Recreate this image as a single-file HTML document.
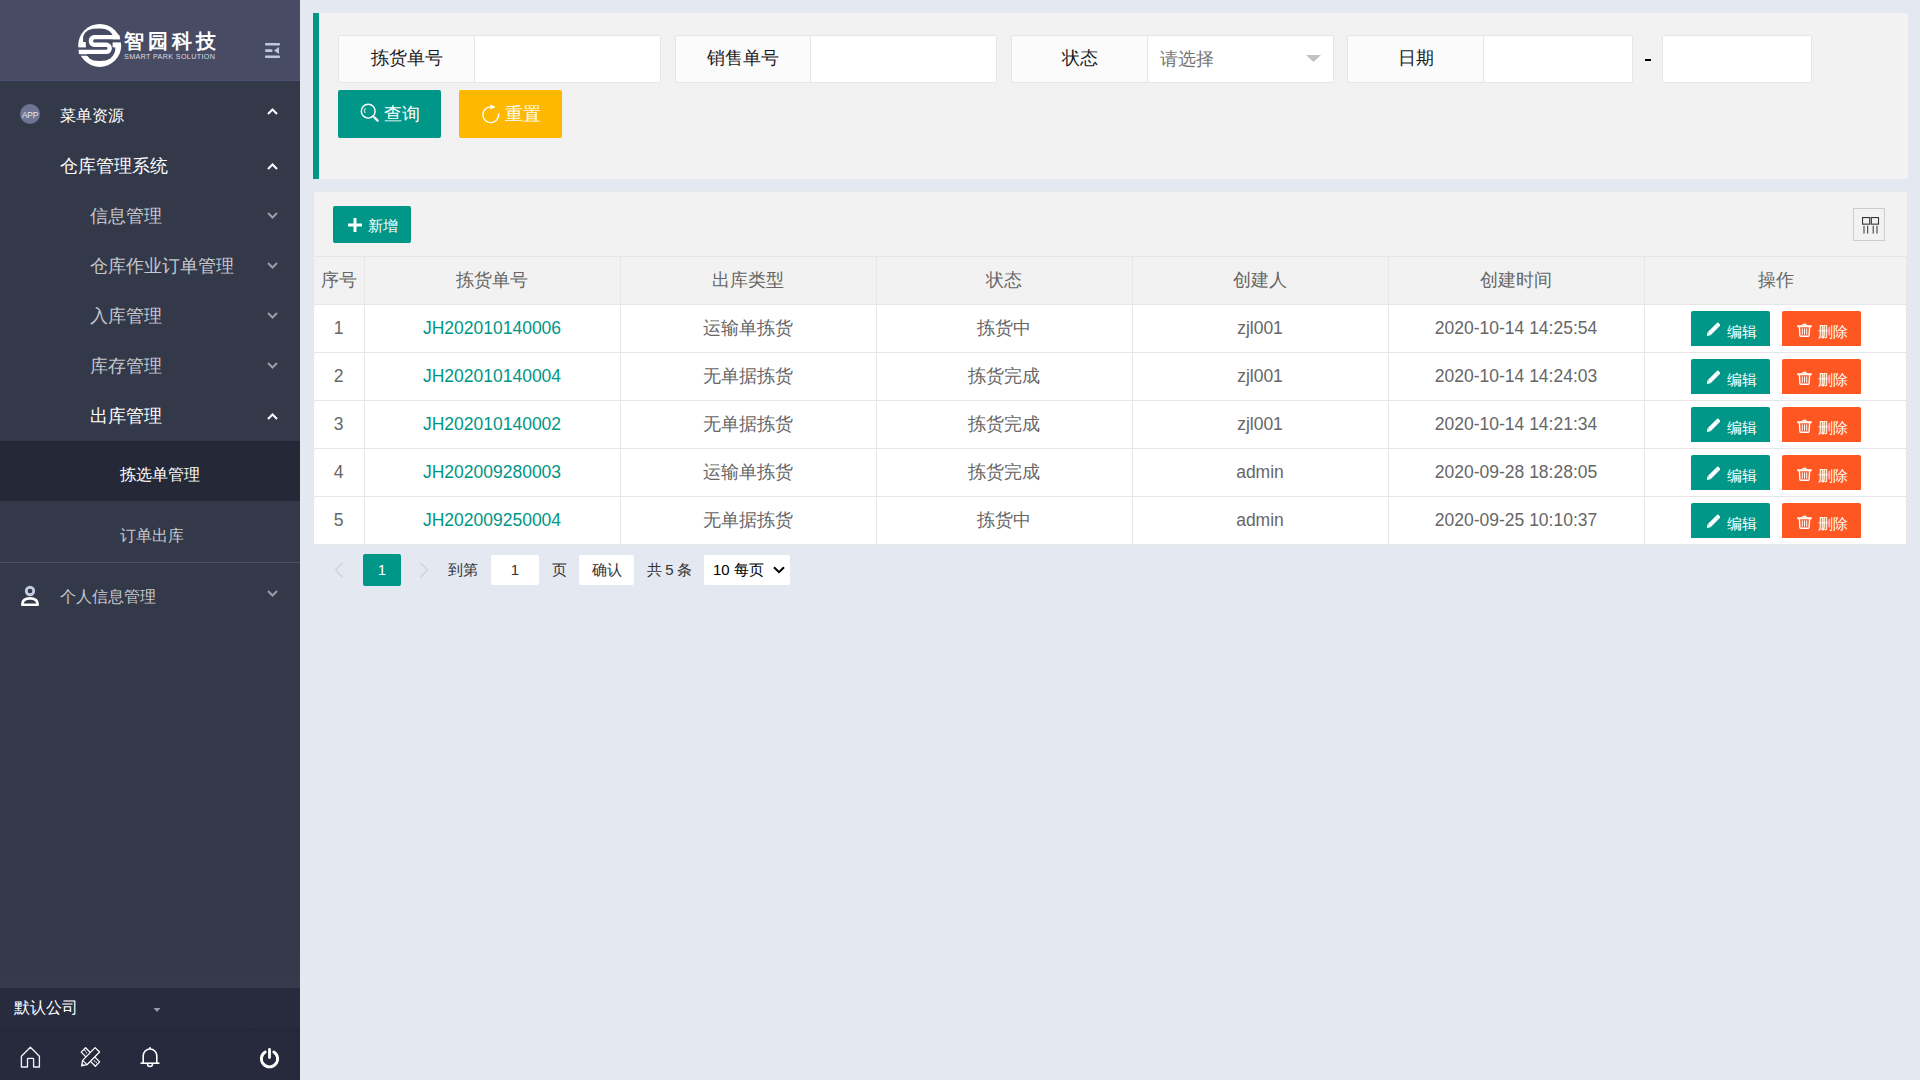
<!DOCTYPE html>
<html><head><meta charset="utf-8">
<style>
*{margin:0;padding:0;box-sizing:border-box}
html,body{width:1920px;height:1080px;overflow:hidden}
body{position:relative;background:#e4e8f1;font-family:"Liberation Sans",sans-serif;font-size:17.5px;color:#666}
.abs{position:absolute}
svg{position:absolute;overflow:visible}
/* sidebar */
#side{position:absolute;left:0;top:0;width:300px;height:1080px;background:#343949;overflow:hidden}
#logo{position:absolute;left:0;top:0;width:300px;height:81px;background:#474c64;border-bottom:1px solid #4b5270}
.mi{position:absolute;height:50px;line-height:50px;color:#c6c8ce;font-size:17.5px;white-space:nowrap}
.mi.w{color:#fff}
/* main */
.lab{position:absolute;top:35px;height:48px;background:#fbfbfb;border:1px solid #e6e6e6;border-radius:2px 0 0 2px;text-align:center;line-height:44px;color:#1a1a1a;font-size:17.5px}
.inp{position:absolute;top:35px;height:48px;background:#fff;border:1px solid #e6e6e6;border-left:none;border-radius:0 2px 2px 0}
.btn{position:absolute;color:#fff;text-align:center;border-radius:2px;white-space:nowrap}
.th,.td{position:absolute;text-align:center;white-space:nowrap;height:48px;line-height:48px;color:#666}
.vl{position:absolute;width:1px;background:#e6e6e6}
.hl{position:absolute;height:1px;background:#e6e6e6}
</style></head>
<body>
<div id="side">
  <div id="logo">
    <svg style="left:74px;top:20px" width="52" height="52" viewBox="0 0 52 52">
      <circle cx="25.7" cy="25.4" r="21.5" fill="#fff"/>
      <path d="M25.6 8.4 L31 8.9 L35 10.8 L37.5 13.2 L38.6 15 L38.6 27.2 L41.4 27.6 L41 31.5 L39.3 35.3 L36.3 38.6 L32 40.6 L25.6 41.1 L19.3 40.5 L15.5 38.5 L13 35.6 L12 30 L11.8 21.9 L9.1 21.9 L9.1 16.5 L11 12.8 L14 10.2 L19 8.8 Z" fill="#474c64"/>
      <rect x="0" y="27.4" width="14" height="2.7" fill="#474c64"/>
      <rect x="37" y="19.3" width="15" height="3.1" fill="#474c64"/>
      <path d="M4 34.2 H13.5 L14.5 35.7 H6.5 Z" fill="#474c64"/>
      <path d="M45.6 17.1 H20.2 A3.9 3.9 0 0 0 20.2 24.8 H32.2 A3.5 3.5 0 0 1 32.2 31.9 H4.8" fill="none" stroke="#fff" stroke-width="4.4"/>
    </svg>
    <div class="abs" style="left:124px;top:25px;font-size:20px;line-height:32px;font-weight:bold;color:#fff;letter-spacing:4px;white-space:nowrap">智园科技</div>
    <div class="abs" style="left:124px;top:52px;font-size:7.2px;line-height:10px;color:#d8dae2;letter-spacing:0.35px;white-space:nowrap">SMART PARK SOLUTION</div>
    <svg style="left:265px;top:43px" width="15" height="15" viewBox="0 0 15 15">
      <rect x="0" y="0" width="15" height="2.4" rx="1" fill="#c0c6dc"/>
      <rect x="0" y="6.2" width="7.5" height="2.8" rx="1.2" fill="#c0c6dc"/>
      <path d="M14 4 V11 L9 7.6 Z" fill="#c0c6dc"/>
      <rect x="0" y="12.4" width="15" height="2.6" rx="1" fill="#c0c6dc"/>
    </svg>
  </div>
  <!-- menu -->
  <div class="abs" style="left:20px;top:104px;width:20px;height:20px;border-radius:50%;background:#6e7492;color:#e6e7ee;font-size:8.4px;line-height:23px;text-align:center;letter-spacing:-0.3px">APP</div>
  <div class="mi w" style="left:60px;top:90px;font-size:16.25px">菜单资源</div>
  <svg style="left:267px;top:108px" width="11" height="7" viewBox="0 0 11 7"><path d="M1 6 L5.5 1.5 L10 6" fill="none" stroke="#fff" stroke-width="2"/></svg>
  <div class="mi w" style="left:60px;top:141px">仓库管理系统</div>
  <svg style="left:267px;top:163px" width="11" height="7" viewBox="0 0 11 7"><path d="M1 6 L5.5 1.5 L10 6" fill="none" stroke="#fff" stroke-width="2"/></svg>
  <div class="mi" style="left:90px;top:191px">信息管理</div>
  <svg style="left:267px;top:212px" width="11" height="7" viewBox="0 0 11 7"><path d="M1 1 L5.5 5.5 L10 1" fill="none" stroke="#9a9dab" stroke-width="2"/></svg>
  <div class="mi" style="left:90px;top:241px">仓库作业订单管理</div>
  <svg style="left:267px;top:262px" width="11" height="7" viewBox="0 0 11 7"><path d="M1 1 L5.5 5.5 L10 1" fill="none" stroke="#9a9dab" stroke-width="2"/></svg>
  <div class="mi" style="left:90px;top:291px">入库管理</div>
  <svg style="left:267px;top:312px" width="11" height="7" viewBox="0 0 11 7"><path d="M1 1 L5.5 5.5 L10 1" fill="none" stroke="#9a9dab" stroke-width="2"/></svg>
  <div class="mi" style="left:90px;top:341px">库存管理</div>
  <svg style="left:267px;top:362px" width="11" height="7" viewBox="0 0 11 7"><path d="M1 1 L5.5 5.5 L10 1" fill="none" stroke="#9a9dab" stroke-width="2"/></svg>
  <div class="mi w" style="left:90px;top:391px">出库管理</div>
  <svg style="left:267px;top:413px" width="11" height="7" viewBox="0 0 11 7"><path d="M1 6 L5.5 1.5 L10 6" fill="none" stroke="#fff" stroke-width="2"/></svg>
  <div class="abs" style="left:0;top:441px;width:300px;height:60px;background:#252937"></div>
  <div class="mi w" style="left:120px;top:449px;font-size:16.25px">拣选单管理</div>
  <div class="mi" style="left:120px;top:510px;font-size:16.25px">订单出库</div>
  <div class="abs" style="left:0;top:562px;width:300px;height:1px;background:#4a4e68"></div>
  <svg style="left:20px;top:585px" width="20" height="22" viewBox="0 0 20 22"><circle cx="10" cy="6" r="3.75" fill="none" stroke="#c5cce0" stroke-width="2.8"/><path d="M2.3 19.75 C2.3 15.2 4.8 13.4 10 13.4 C15.2 13.4 17.7 15.2 17.7 19.75 Z" fill="none" stroke="#fff" stroke-width="2.7" stroke-linejoin="round"/></svg>
  <div class="mi" style="left:60px;top:571px;font-size:16.25px">个人信息管理</div>
  <svg style="left:267px;top:590px" width="11" height="7" viewBox="0 0 11 7"><path d="M1 1 L5.5 5.5 L10 1" fill="none" stroke="#9a9dab" stroke-width="2"/></svg>
  <!-- bottom -->
  <div class="abs" style="left:0;top:950px;width:300px;height:38px;background:linear-gradient(#343949,#363a4c)"></div>
  <div class="abs" style="left:0;top:988px;width:300px;height:40px;background:#272b3d"></div>
  <div class="abs" style="left:0;top:1028px;width:300px;height:52px;background:linear-gradient(#23273a,#262a3c 8px,#262a3c)"></div>
  <div class="mi w" style="left:14px;top:983px;font-size:16px">默认公司</div>
  <svg style="left:153px;top:1007px" width="8" height="6" viewBox="0 0 8 6"><path d="M0.5 1 H7.5 L4 5 Z" fill="#9b9ca3"/></svg>

  <svg style="left:20px;top:1045.5px" width="22" height="23" viewBox="0 0 22 23">
    <path d="M1.4 21 V10.3 L10.4 1.3 L19.4 10.3 V21 H13.6 V13.2 A0.9 0.9 0 0 0 12.7 12.3 H8.4 A0.9 0.9 0 0 0 7.5 13.2 V21 Z" fill="none" stroke="#f0f0f2" stroke-width="1.35" stroke-linejoin="round"/>
  </svg>
  <svg style="left:80.5px;top:1046.6px" width="20" height="20" viewBox="0 0 21 21">
    <path d="M4.8 0.8 L0.2 5.4 L15.1 20.2 L19.6 15.6 Z" fill="none" stroke="#fff" stroke-width="1.3" stroke-linejoin="round"/>
    <path d="M3.6 3.2 L5 4.6 M5.2 5.6 L6.2 6.6 M13.6 14 L15 15.4 M15.6 16 L16.6 17" stroke="#fff" stroke-width="1.1"/>
    <path d="M14.8 0.6 L19.5 5.3 L6.3 18.6 L0.6 19.8 L1.7 14.1 Z" fill="#262a3c" stroke="#fff" stroke-width="1.3" stroke-linejoin="round"/>
    <path d="M1.7 14.1 L6.3 18.6" stroke="#fff" stroke-width="1.1"/>
    <path d="M0.6 19.8 L1.2 16.8 L3.6 19.2 Z" fill="#e8e8ea"/>
  </svg>
  <svg style="left:140.3px;top:1046px" width="20" height="22" viewBox="0 0 20 22">
    <path d="M10 1 V3" stroke="#fff" stroke-width="1.4"/>
    <path d="M3.2 17 V9.8 A6.8 6.8 0 0 1 16.8 9.8 V17" fill="none" stroke="#fff" stroke-width="1.6"/>
    <path d="M0.5 17.2 H19.5" stroke="#fff" stroke-width="1.6"/>
    <path d="M7.5 18 A2.5 2.5 0 0 0 12.5 18" fill="none" stroke="#fff" stroke-width="1.5"/>
  </svg>
  <svg style="left:259px;top:1046px" width="22" height="23" viewBox="0 0 22 23">
    <path d="M6.24 5.9 A8.1 8.1 0 1 0 14.76 5.9" fill="none" stroke="#fff" stroke-width="2.9" stroke-linecap="round"/>
    <path d="M10.5 3.4 V11.6" stroke="#fff" stroke-width="2.8" stroke-linecap="round"/>
  </svg></div>

<!-- search panel -->
<div class="abs" style="left:313px;top:13px;width:1595px;height:166px;background:#f2f2f2;border-radius:0 2px 2px 0"></div>
<div class="abs" style="left:313px;top:13px;width:6px;height:166px;background:#009688"></div>
<div class="lab" style="left:338px;width:137px">拣货单号</div>
<div class="inp" style="left:475px;width:186px"></div>
<div class="lab" style="left:675px;width:136px">销售单号</div>
<div class="inp" style="left:811px;width:186px"></div>
<div class="lab" style="left:1011px;width:137px">状态</div>
<div class="inp" style="left:1148px;width:186px"></div>
<div class="abs" style="left:1160px;top:35px;line-height:48px;color:#757575;font-size:17.5px">请选择</div>
<svg style="left:1306px;top:55px" width="15" height="7" viewBox="0 0 15 7"><path d="M0 0 H15 L7.5 7 Z" fill="#c2c2c2"/></svg>
<div class="lab" style="left:1347px;width:137px">日期</div>
<div class="inp" style="left:1484px;width:149px"></div>
<div class="abs" style="left:1645px;top:59px;width:6px;height:2px;background:#000"></div>
<div class="inp" style="left:1662px;width:150px;border-left:1px solid #e6e6e6;border-radius:2px"></div>
<div class="btn" style="left:338px;top:90px;width:103px;height:48px;background:#009688;line-height:48px;font-size:17.5px;padding-left:46px;text-align:left">查询</div>
<svg style="left:360px;top:103px" width="20" height="20" viewBox="0 0 20 20"><circle cx="8.2" cy="8.2" r="6.9" fill="none" stroke="#fff" stroke-width="1.45"/><path d="M13.2 13.2 L17.6 17.6" stroke="#fff" stroke-width="2.3" stroke-linecap="round"/><path d="M13.8 14.6 L14.6 13.8" stroke="#009688" stroke-width="0.6"/><path d="M5.4 5.2 A3.8 3.8 0 0 0 5.2 10" fill="none" stroke="#fff" stroke-width="1"/></svg>
<div class="btn" style="left:459px;top:90px;width:103px;height:48px;background:#ffb800;line-height:48px;font-size:17.5px;padding-left:46px;text-align:left">重置</div>
<svg style="left:481px;top:104px" width="20" height="20" viewBox="0 0 20 20"><path d="M9.75 2.85 A7.9 7.9 0 1 0 17.6 9.5" fill="none" stroke="#fff" stroke-width="1.4"/><path d="M9.4 0.4 L14.6 2.9 L9.4 5.4 Z" fill="#fff"/></svg>

<!-- table panel -->
<div class="abs" style="left:313px;top:191px;width:1595px;height:66px;background:#f2f2f2;border:1px solid #e6e6e6;border-bottom:none"></div>
<div class="btn" style="left:333px;top:206px;width:78px;height:37px;background:#009688;line-height:39px;font-size:15px;padding-left:35px;text-align:left">新增</div>
<svg style="left:348px;top:218px" width="14" height="14" viewBox="0 0 14 14"><path d="M7 0 V14 M0 7 H14" stroke="#fff" stroke-width="3"/></svg>
<div class="abs" style="left:1853px;top:208px;width:32px;height:33px;border:1px solid #ccc"></div>
<svg style="left:1862px;top:216.5px" width="17" height="17" viewBox="0 0 17 17"><rect x="0.55" y="0.55" width="7.2" height="6.6" fill="none" stroke="#333" stroke-width="1.1"/><rect x="9.3" y="0.55" width="7.2" height="6.6" fill="none" stroke="#333" stroke-width="1.1"/><path d="M2 8.8 V16.6 M5.7 8.8 V16.6 M11.2 8.8 V16.6 M15 8.8 V16.6" stroke="#333" stroke-width="1"/></svg>
<div class="abs" style="left:313px;top:256px;width:1594px;height:48px;background:#f2f2f2"></div>
<div class="abs" style="left:313px;top:304px;width:1594px;height:240px;background:#fff"></div>
<div class="hl" style="left:313px;top:256px;width:1595px"></div>
<div class="hl" style="left:313px;top:304px;width:1594px"></div>
<div class="hl" style="left:313px;top:352px;width:1594px"></div>
<div class="hl" style="left:313px;top:400px;width:1594px"></div>
<div class="hl" style="left:313px;top:448px;width:1594px"></div>
<div class="hl" style="left:313px;top:496px;width:1594px"></div>
<div class="hl" style="left:313px;top:544px;width:1594px"></div>
<div class="vl" style="left:313px;top:256px;height:288px"></div>
<div class="vl" style="left:364px;top:256px;height:288px"></div>
<div class="vl" style="left:620px;top:256px;height:288px"></div>
<div class="vl" style="left:876px;top:256px;height:288px"></div>
<div class="vl" style="left:1132px;top:256px;height:288px"></div>
<div class="vl" style="left:1388px;top:256px;height:288px"></div>
<div class="vl" style="left:1644px;top:256px;height:288px"></div>
<div class="vl" style="left:1906px;top:256px;height:288px"></div>
<div class="th" style="left:313px;top:256px;width:51px">序号</div>
<div class="th" style="left:364px;top:256px;width:256px">拣货单号</div>
<div class="th" style="left:620px;top:256px;width:256px">出库类型</div>
<div class="th" style="left:876px;top:256px;width:256px">状态</div>
<div class="th" style="left:1132px;top:256px;width:256px">创建人</div>
<div class="th" style="left:1388px;top:256px;width:256px">创建时间</div>
<div class="th" style="left:1644px;top:256px;width:263px">操作</div>
<div class="td" style="left:313px;top:304px;width:51px">1</div>
<div class="td" style="left:364px;top:304px;width:256px;color:#009688">JH202010140006</div>
<div class="td" style="left:620px;top:304px;width:256px">运输单拣货</div>
<div class="td" style="left:876px;top:304px;width:256px">拣货中</div>
<div class="td" style="left:1132px;top:304px;width:256px">zjl001</div>
<div class="td" style="left:1388px;top:304px;width:256px">2020-10-14 14:25:54</div>
<div class="btn" style="left:1691px;top:311px;width:79px;height:35px;background:#009688;border-radius:2px 2px 0 0"></div>
<svg style="left:1706px;top:322px" width="15" height="15" viewBox="0 0 15 15"><path d="M0.8 14 L1.6 10.2 L10.6 1.2 A1.6 1.6 0 0 1 12.9 1.2 L13.6 1.9 A1.6 1.6 0 0 1 13.6 4.2 L4.6 13.2 Z" fill="#fff"/><path d="M9.6 2.4 L12.4 5.2 M1.9 9.9 L4.9 12.9" stroke="#009688" stroke-width="0.5" opacity="0.6"/></svg>
<div class="abs" style="left:1727px;top:323px;line-height:17px;font-size:15px;font-weight:500;color:#fff;white-space:nowrap">编辑</div>
<div class="btn" style="left:1782px;top:311px;width:79px;height:35px;background:#ff5722;border-radius:2px 2px 0 0"></div>
<svg style="left:1797px;top:323px" width="15" height="15" viewBox="0 0 15 15"><path d="M1 3.2 H14" stroke="#fff" stroke-width="1.9" stroke-linecap="round"/><path d="M5.2 2.4 Q5.4 1 7.5 1 Q9.6 1 9.8 2.4" fill="#fff" stroke="#fff" stroke-width="1"/><path d="M2.4 4 L2.9 12.3 Q3 13.2 4 13.2 H11 Q12 13.2 12.1 12.3 L12.6 4" fill="none" stroke="#fff" stroke-width="1.4"/><path d="M5.3 5.4 V11.6 M7.5 5.4 V11.6 M9.7 5.4 V11.6" stroke="#fff" stroke-width="1"/></svg>
<div class="abs" style="left:1818px;top:323px;line-height:17px;font-size:15px;font-weight:500;color:#fff;white-space:nowrap">删除</div>
<div class="td" style="left:313px;top:352px;width:51px">2</div>
<div class="td" style="left:364px;top:352px;width:256px;color:#009688">JH202010140004</div>
<div class="td" style="left:620px;top:352px;width:256px">无单据拣货</div>
<div class="td" style="left:876px;top:352px;width:256px">拣货完成</div>
<div class="td" style="left:1132px;top:352px;width:256px">zjl001</div>
<div class="td" style="left:1388px;top:352px;width:256px">2020-10-14 14:24:03</div>
<div class="btn" style="left:1691px;top:359px;width:79px;height:35px;background:#009688;border-radius:2px 2px 0 0"></div>
<svg style="left:1706px;top:370px" width="15" height="15" viewBox="0 0 15 15"><path d="M0.8 14 L1.6 10.2 L10.6 1.2 A1.6 1.6 0 0 1 12.9 1.2 L13.6 1.9 A1.6 1.6 0 0 1 13.6 4.2 L4.6 13.2 Z" fill="#fff"/><path d="M9.6 2.4 L12.4 5.2 M1.9 9.9 L4.9 12.9" stroke="#009688" stroke-width="0.5" opacity="0.6"/></svg>
<div class="abs" style="left:1727px;top:371px;line-height:17px;font-size:15px;font-weight:500;color:#fff;white-space:nowrap">编辑</div>
<div class="btn" style="left:1782px;top:359px;width:79px;height:35px;background:#ff5722;border-radius:2px 2px 0 0"></div>
<svg style="left:1797px;top:371px" width="15" height="15" viewBox="0 0 15 15"><path d="M1 3.2 H14" stroke="#fff" stroke-width="1.9" stroke-linecap="round"/><path d="M5.2 2.4 Q5.4 1 7.5 1 Q9.6 1 9.8 2.4" fill="#fff" stroke="#fff" stroke-width="1"/><path d="M2.4 4 L2.9 12.3 Q3 13.2 4 13.2 H11 Q12 13.2 12.1 12.3 L12.6 4" fill="none" stroke="#fff" stroke-width="1.4"/><path d="M5.3 5.4 V11.6 M7.5 5.4 V11.6 M9.7 5.4 V11.6" stroke="#fff" stroke-width="1"/></svg>
<div class="abs" style="left:1818px;top:371px;line-height:17px;font-size:15px;font-weight:500;color:#fff;white-space:nowrap">删除</div>
<div class="td" style="left:313px;top:400px;width:51px">3</div>
<div class="td" style="left:364px;top:400px;width:256px;color:#009688">JH202010140002</div>
<div class="td" style="left:620px;top:400px;width:256px">无单据拣货</div>
<div class="td" style="left:876px;top:400px;width:256px">拣货完成</div>
<div class="td" style="left:1132px;top:400px;width:256px">zjl001</div>
<div class="td" style="left:1388px;top:400px;width:256px">2020-10-14 14:21:34</div>
<div class="btn" style="left:1691px;top:407px;width:79px;height:35px;background:#009688;border-radius:2px 2px 0 0"></div>
<svg style="left:1706px;top:418px" width="15" height="15" viewBox="0 0 15 15"><path d="M0.8 14 L1.6 10.2 L10.6 1.2 A1.6 1.6 0 0 1 12.9 1.2 L13.6 1.9 A1.6 1.6 0 0 1 13.6 4.2 L4.6 13.2 Z" fill="#fff"/><path d="M9.6 2.4 L12.4 5.2 M1.9 9.9 L4.9 12.9" stroke="#009688" stroke-width="0.5" opacity="0.6"/></svg>
<div class="abs" style="left:1727px;top:419px;line-height:17px;font-size:15px;font-weight:500;color:#fff;white-space:nowrap">编辑</div>
<div class="btn" style="left:1782px;top:407px;width:79px;height:35px;background:#ff5722;border-radius:2px 2px 0 0"></div>
<svg style="left:1797px;top:419px" width="15" height="15" viewBox="0 0 15 15"><path d="M1 3.2 H14" stroke="#fff" stroke-width="1.9" stroke-linecap="round"/><path d="M5.2 2.4 Q5.4 1 7.5 1 Q9.6 1 9.8 2.4" fill="#fff" stroke="#fff" stroke-width="1"/><path d="M2.4 4 L2.9 12.3 Q3 13.2 4 13.2 H11 Q12 13.2 12.1 12.3 L12.6 4" fill="none" stroke="#fff" stroke-width="1.4"/><path d="M5.3 5.4 V11.6 M7.5 5.4 V11.6 M9.7 5.4 V11.6" stroke="#fff" stroke-width="1"/></svg>
<div class="abs" style="left:1818px;top:419px;line-height:17px;font-size:15px;font-weight:500;color:#fff;white-space:nowrap">删除</div>
<div class="td" style="left:313px;top:448px;width:51px">4</div>
<div class="td" style="left:364px;top:448px;width:256px;color:#009688">JH202009280003</div>
<div class="td" style="left:620px;top:448px;width:256px">运输单拣货</div>
<div class="td" style="left:876px;top:448px;width:256px">拣货完成</div>
<div class="td" style="left:1132px;top:448px;width:256px">admin</div>
<div class="td" style="left:1388px;top:448px;width:256px">2020-09-28 18:28:05</div>
<div class="btn" style="left:1691px;top:455px;width:79px;height:35px;background:#009688;border-radius:2px 2px 0 0"></div>
<svg style="left:1706px;top:466px" width="15" height="15" viewBox="0 0 15 15"><path d="M0.8 14 L1.6 10.2 L10.6 1.2 A1.6 1.6 0 0 1 12.9 1.2 L13.6 1.9 A1.6 1.6 0 0 1 13.6 4.2 L4.6 13.2 Z" fill="#fff"/><path d="M9.6 2.4 L12.4 5.2 M1.9 9.9 L4.9 12.9" stroke="#009688" stroke-width="0.5" opacity="0.6"/></svg>
<div class="abs" style="left:1727px;top:467px;line-height:17px;font-size:15px;font-weight:500;color:#fff;white-space:nowrap">编辑</div>
<div class="btn" style="left:1782px;top:455px;width:79px;height:35px;background:#ff5722;border-radius:2px 2px 0 0"></div>
<svg style="left:1797px;top:467px" width="15" height="15" viewBox="0 0 15 15"><path d="M1 3.2 H14" stroke="#fff" stroke-width="1.9" stroke-linecap="round"/><path d="M5.2 2.4 Q5.4 1 7.5 1 Q9.6 1 9.8 2.4" fill="#fff" stroke="#fff" stroke-width="1"/><path d="M2.4 4 L2.9 12.3 Q3 13.2 4 13.2 H11 Q12 13.2 12.1 12.3 L12.6 4" fill="none" stroke="#fff" stroke-width="1.4"/><path d="M5.3 5.4 V11.6 M7.5 5.4 V11.6 M9.7 5.4 V11.6" stroke="#fff" stroke-width="1"/></svg>
<div class="abs" style="left:1818px;top:467px;line-height:17px;font-size:15px;font-weight:500;color:#fff;white-space:nowrap">删除</div>
<div class="td" style="left:313px;top:496px;width:51px">5</div>
<div class="td" style="left:364px;top:496px;width:256px;color:#009688">JH202009250004</div>
<div class="td" style="left:620px;top:496px;width:256px">无单据拣货</div>
<div class="td" style="left:876px;top:496px;width:256px">拣货中</div>
<div class="td" style="left:1132px;top:496px;width:256px">admin</div>
<div class="td" style="left:1388px;top:496px;width:256px">2020-09-25 10:10:37</div>
<div class="btn" style="left:1691px;top:503px;width:79px;height:35px;background:#009688;border-radius:2px 2px 0 0"></div>
<svg style="left:1706px;top:514px" width="15" height="15" viewBox="0 0 15 15"><path d="M0.8 14 L1.6 10.2 L10.6 1.2 A1.6 1.6 0 0 1 12.9 1.2 L13.6 1.9 A1.6 1.6 0 0 1 13.6 4.2 L4.6 13.2 Z" fill="#fff"/><path d="M9.6 2.4 L12.4 5.2 M1.9 9.9 L4.9 12.9" stroke="#009688" stroke-width="0.5" opacity="0.6"/></svg>
<div class="abs" style="left:1727px;top:515px;line-height:17px;font-size:15px;font-weight:500;color:#fff;white-space:nowrap">编辑</div>
<div class="btn" style="left:1782px;top:503px;width:79px;height:35px;background:#ff5722;border-radius:2px 2px 0 0"></div>
<svg style="left:1797px;top:515px" width="15" height="15" viewBox="0 0 15 15"><path d="M1 3.2 H14" stroke="#fff" stroke-width="1.9" stroke-linecap="round"/><path d="M5.2 2.4 Q5.4 1 7.5 1 Q9.6 1 9.8 2.4" fill="#fff" stroke="#fff" stroke-width="1"/><path d="M2.4 4 L2.9 12.3 Q3 13.2 4 13.2 H11 Q12 13.2 12.1 12.3 L12.6 4" fill="none" stroke="#fff" stroke-width="1.4"/><path d="M5.3 5.4 V11.6 M7.5 5.4 V11.6 M9.7 5.4 V11.6" stroke="#fff" stroke-width="1"/></svg>
<div class="abs" style="left:1818px;top:515px;line-height:17px;font-size:15px;font-weight:500;color:#fff;white-space:nowrap">删除</div>
<div class="abs" style="left:313px;top:544px;width:1595px;height:51px;border:1px solid #e6e6e6;border-top:none"></div>
<svg style="left:334px;top:562px" width="10" height="16" viewBox="0 0 10 16"><path d="M8.5 0.8 L1.5 8 L8.5 15.2" fill="none" stroke="#d2d2d2" stroke-width="1.3"/></svg>
<div class="btn" style="left:363px;top:554px;width:38px;height:32px;background:#009688;line-height:32px;font-size:15px">1</div>
<svg style="left:419px;top:562px" width="10" height="16" viewBox="0 0 10 16"><path d="M1.5 0.8 L8.5 8 L1.5 15.2" fill="none" stroke="#d2d2d2" stroke-width="1.3"/></svg>
<div class="abs" style="left:448px;top:554px;line-height:32px;font-size:15px;color:#333;white-space:nowrap">到第</div>
<div class="abs" style="left:491px;top:555px;width:48px;height:30px;background:#fff;border-radius:2px;text-align:center;line-height:30px;font-size:15px;color:#333">1</div>
<div class="abs" style="left:552px;top:554px;line-height:32px;font-size:15px;color:#333;white-space:nowrap">页</div>
<div class="abs" style="left:579px;top:555px;width:55px;height:30px;background:#fff;border-radius:2px;text-align:center;line-height:30px;font-size:15px;color:#333">确认</div>
<div class="abs" style="left:647px;top:554px;line-height:32px;font-size:15px;color:#333;white-space:nowrap;word-spacing:-1px">共 5 条</div>
<div class="abs" style="left:704px;top:555px;width:86px;height:30px;background:#fff;border-radius:2px;line-height:30px;font-size:15px;color:#000;padding-left:9px;white-space:nowrap">10 每页</div>
<svg style="left:773px;top:566px" width="12" height="8" viewBox="0 0 12 8"><path d="M1 1.2 L6 6.2 L11 1.2" fill="none" stroke="#000" stroke-width="2"/></svg>
</body></html>
